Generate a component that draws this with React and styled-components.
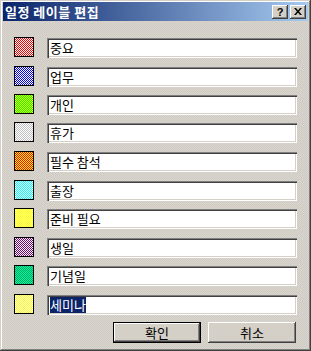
import { Fragment } from "react";
import styled, { createGlobalStyle } from "styled-components";

const GlobalStyle = createGlobalStyle`
  html, body {
    margin: 0;
    padding: 0;
    background: #d4d0c8;
  }
  * {
    box-sizing: border-box;
  }
`;

const labels = [
  { name: "중요", a: "#ff0000", b: "#ffffff" },
  { name: "업무", a: "#0000ff", b: "#ffffff" },
  { name: "개인", a: "#ffff00", b: "#00ff00" },
  { name: "휴가", a: "#c0c0c0", b: "#ffffff" },
  { name: "필수 참석", a: "#ff0000", b: "#ffff00" },
  { name: "출장", a: "#00ffff", b: "#ffffff" },
  { name: "준비 필요", a: "#ffff00", b: "#ffff99" },
  { name: "생일", a: "#800080", b: "#ffffff" },
  { name: "기념일", a: "#00a080", b: "#00ff80" },
  { name: "세미나", a: "#ffff00", b: "#ffffff", selected: true },
];

const Window = styled.div`
  width: 311px;
  height: 351px;
  display: flex;
  flex-direction: column;
  padding: 2px 3px 3px 3px;
  font-family: "Noto Sans CJK KR", "Noto Sans", sans-serif;
  font-size: 13px;
  color: #000;
  background-color: #d4d0c8;
  background-image: conic-gradient(#d9d6cf 25%, #cfcbc2 0 50%, #d9d6cf 0 75%, #cfcbc2 0);
  background-size: 2px 2px;
  box-shadow: inset -1px -1px 0 #404040, inset 1px 1px 0 #d4d0c8,
    inset -2px -2px 0 #808080, inset 2px 2px 0 #ffffff;
`;

const TitleBar = styled.div`
  height: 19px;
  display: flex;
  align-items: center;
  justify-content: space-between;
  padding: 0 2px 0 2px;
  background: linear-gradient(to right, #0a246a, #a6caf0);
`;

const Title = styled.span`
  color: #fff;
  font-weight: bold;
  font-size: 13px;
  line-height: 19px;
  letter-spacing: 0.5px;
`;

const TitleButtons = styled.div`
  display: flex;
  gap: 2px;
`;

const CaptionButton = styled.div`
  width: 16px;
  height: 14px;
  display: flex;
  align-items: center;
  justify-content: center;
  background: #d4d0c8;
  box-shadow: inset -1px -1px 0 #404040, inset 1px 1px 0 #ffffff,
    inset -2px -2px 0 #808080;
  font-family: "Liberation Sans", sans-serif;
  font-weight: bold;
  font-size: 11px;
  line-height: 14px;
`;

/* row pitch of the original dialog alternates 29 / 28 px */
const Body = styled.div`
  display: grid;
  grid-template-columns: 20px 250px;
  grid-template-rows: 29px 28px 28px 29px 29px 28px 29px 28px 29px 21px;
  column-gap: 13px;
  padding: 16px 0 0 11px;
`;

// dither brush is aligned to the screen, like the GDI pattern brush
const Swatch = styled.div`
  width: 20px;
  height: 20px;
  border: 1px solid #000;
  background-color: ${(p) => p.$b};
  background-image: conic-gradient(
    ${(p) => p.$a} 25%,
    ${(p) => p.$b} 0 50%,
    ${(p) => p.$a} 0 75%,
    ${(p) => p.$b} 0
  );
  background-size: 2px 2px;
  background-attachment: fixed;
  background-position: 1px 0;
`;

const TextBox = styled.div`
  height: 20px;
  margin-top: 1px;
  display: flex;
  align-items: center;
  padding: 2px 3px 2px 3px;
  background: #fff;
  box-shadow: inset 1px 1px 0 #808080, inset 2px 2px 0 #404040,
    inset -1px -1px 0 #ffffff, inset -2px -2px 0 #d4d0c8;
  white-space: nowrap;
  line-height: 16px;
`;

const Selected = styled.span`
  background: #0a246a;
  color: #fff;
`;

const Footer = styled.div`
  display: flex;
  justify-content: flex-end;
  gap: 7px;
  padding: 7px 12px 0 0;
`;

const Button = styled.div`
  width: 88px;
  height: 21px;
  display: flex;
  align-items: center;
  justify-content: center;
  background: #d4d0c8;
  box-shadow: ${(p) =>
    p.$default
      ? "inset 0 0 0 1px #000, inset -2px -2px 0 #404040, inset 2px 2px 0 #ffffff, inset -3px -3px 0 #808080"
      : "inset -1px -1px 0 #404040, inset 1px 1px 0 #ffffff, inset -2px -2px 0 #808080"};
  line-height: 16px;
`;

export default function App() {
  return (
    <>
      <GlobalStyle />
      <Window>
        <TitleBar>
          <Title>일정 레이블 편집</Title>
          <TitleButtons>
            <CaptionButton>?</CaptionButton>
            <CaptionButton>
              <svg width="8" height="7" viewBox="0 0 8 7">
                <path d="M0 0h2l2 2.5L6 0h2L5 3.5 8 7H6L4 4.5 2 7H0l3-3.5z" fill="#000" />
              </svg>
            </CaptionButton>
          </TitleButtons>
        </TitleBar>
        <Body>
          {labels.map((l) => (
            <Fragment key={l.name}>
              <Swatch $a={l.a} $b={l.b} />
              <TextBox>
                {l.selected ? <Selected>{l.name}</Selected> : l.name}
              </TextBox>
            </Fragment>
          ))}
        </Body>
        <Footer>
          <Button $default>확인</Button>
          <Button>취소</Button>
        </Footer>
      </Window>
    </>
  );
}
